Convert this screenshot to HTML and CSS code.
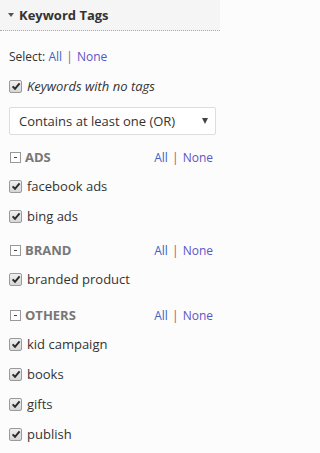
FILE: index.html
```html
<!DOCTYPE html>
<html>
<head>
<meta charset="utf-8">
<link rel="stylesheet" href="styles.css">
</head>
<body>
<div class="panel">
  <div class="panel-head">
    <span class="caret"></span>
    <span class="panel-title">Keyword Tags</span>
  </div>
  <div class="panel-body">
    <div class="select-row">Select: <a class="lnk">All</a> <span class="sep">|</span> <a class="lnk lnk2">None</a></div>
    <div class="item notags">
      <span class="cb"><svg viewBox="0 0 10 10" width="10" height="10"><path d="M1.6 5.4 L4 7.8 L8.6 2.4" fill="none" stroke="#2b2b2b" stroke-width="2"/></svg></span>
      <span class="it">Keywords with no tags</span>
    </div>
    <div class="dropdown">
      <span>Contains at least one (OR)</span>
      <span class="arrow"></span>
    </div>

    <div class="section first">
      <div class="sec-head">
        <span class="minus"></span><span class="sec-name">ADS</span>
        <span class="sec-links"><a class="lnk">All</a> <span class="sep">|</span> <a class="lnk lnk2">None</a></span>
      </div>
      <div class="item"><span class="cb"><svg viewBox="0 0 10 10" width="10" height="10"><path d="M1.6 5.4 L4 7.8 L8.6 2.4" fill="none" stroke="#2b2b2b" stroke-width="2"/></svg></span><span>facebook ads</span></div>
      <div class="item"><span class="cb"><svg viewBox="0 0 10 10" width="10" height="10"><path d="M1.6 5.4 L4 7.8 L8.6 2.4" fill="none" stroke="#2b2b2b" stroke-width="2"/></svg></span><span>bing ads</span></div>
    </div>

    <div class="section">
      <div class="sec-head">
        <span class="minus"></span><span class="sec-name">BRAND</span>
        <span class="sec-links"><a class="lnk">All</a> <span class="sep">|</span> <a class="lnk lnk2">None</a></span>
      </div>
      <div class="item"><span class="cb"><svg viewBox="0 0 10 10" width="10" height="10"><path d="M1.6 5.4 L4 7.8 L8.6 2.4" fill="none" stroke="#2b2b2b" stroke-width="2"/></svg></span><span>branded product</span></div>
    </div>

    <div class="section last">
      <div class="sec-head">
        <span class="minus"></span><span class="sec-name">OTHERS</span>
        <span class="sec-links"><a class="lnk">All</a> <span class="sep">|</span> <a class="lnk lnk2">None</a></span>
      </div>
      <div class="item"><span class="cb"><svg viewBox="0 0 10 10" width="10" height="10"><path d="M1.6 5.4 L4 7.8 L8.6 2.4" fill="none" stroke="#2b2b2b" stroke-width="2"/></svg></span><span>kid campaign</span></div>
      <div class="item"><span class="cb"><svg viewBox="0 0 10 10" width="10" height="10"><path d="M1.6 5.4 L4 7.8 L8.6 2.4" fill="none" stroke="#2b2b2b" stroke-width="2"/></svg></span><span>books</span></div>
      <div class="item"><span class="cb"><svg viewBox="0 0 10 10" width="10" height="10"><path d="M1.6 5.4 L4 7.8 L8.6 2.4" fill="none" stroke="#2b2b2b" stroke-width="2"/></svg></span><span>gifts</span></div>
      <div class="item"><span class="cb"><svg viewBox="0 0 10 10" width="10" height="10"><path d="M1.6 5.4 L4 7.8 L8.6 2.4" fill="none" stroke="#2b2b2b" stroke-width="2"/></svg></span><span>publish</span></div>
    </div>
  </div>
</div>
</body>
</html>
```

FILE: styles.css
```css
html, body {
  margin: 0;
  padding: 0;
  background: #fcfcfc;
}
body {
  font-family: "Open Sans", "Liberation Sans", sans-serif;
  color: #333;
  width: 220px;
  height: 453px;
  overflow: hidden;
}
.panel {
  width: 220px;
}
.panel-head {
  height: 30px;
  background: #f5f5f5;
  border-bottom: 1px dotted #aaa;
  display: flex;
  align-items: center;
  padding-left: 8px;
  box-sizing: content-box;
}
.caret {
  width: 0;
  height: 0;
  border-left: 3.5px solid transparent;
  border-right: 3.5px solid transparent;
  border-top: 4px solid #555;
  margin-right: 5px;
}
.panel-title {
  font-weight: bold;
  font-size: 13px;
  color: #333;
}
.panel-body {
  padding: 16px 4px 0 9px;
}
.select-row {
  height: 20px;
  line-height: 20px;
  font-size: 12px;
  color: #333;
}
.lnk {
  color: #3b64c4;
  text-decoration: none;
}
.lnk2 {
  color: #5a55c6;
}
.sep {
  color: #b0506a;
  margin: 0 1px;
}
.item {
  height: 30px;
  display: flex;
  align-items: center;
  font-size: 13px;
  color: #333;
}
.item.notags {
  height: 20px;
  margin-top: 9px;
}
.it {
  font-style: italic;
}
.cb {
  width: 11px;
  height: 11px;
  border: 1px solid #9a9a9a;
  border-radius: 2px;
  background: linear-gradient(#f0f0f0, #d6d6d6);
  display: flex;
  align-items: center;
  justify-content: center;
  margin-right: 5px;
  flex: none;
}
.dropdown {
  margin-top: 11px;
  height: 28px;
  box-sizing: border-box;
  border: 1px solid #ddd;
  border-radius: 2px;
  background: #fff;
  display: flex;
  align-items: center;
  justify-content: space-between;
  padding: 0 7px 0 9px;
  font-size: 13px;
  color: #333;
}
.arrow {
  width: 0;
  height: 0;
  border-left: 3.5px solid transparent;
  border-right: 3.5px solid transparent;
  border-top: 6px solid #444;
}
.section {
  margin-top: 9px;
}
.section.first {
  margin-top: 12px;
}
.section.last {
  margin-top: 11px;
}
.sec-head {
  height: 20px;
  display: flex;
  align-items: center;
  margin-bottom: 4px;
}
.minus {
  width: 9px;
  height: 9px;
  border: 1px solid #999;
  background: #fff;
  position: relative;
  margin: 0 4px 0 1px;
  flex: none;
}
.minus::after {
  content: "";
  position: absolute;
  left: 3px;
  top: 4px;
  width: 3px;
  height: 1px;
  background: #444;
}
.sec-name {
  font-weight: bold;
  font-size: 13px;
  color: #777;
}
.sec-links {
  margin-left: auto;
  font-size: 12px;
  padding-right: 3px;
}
```
